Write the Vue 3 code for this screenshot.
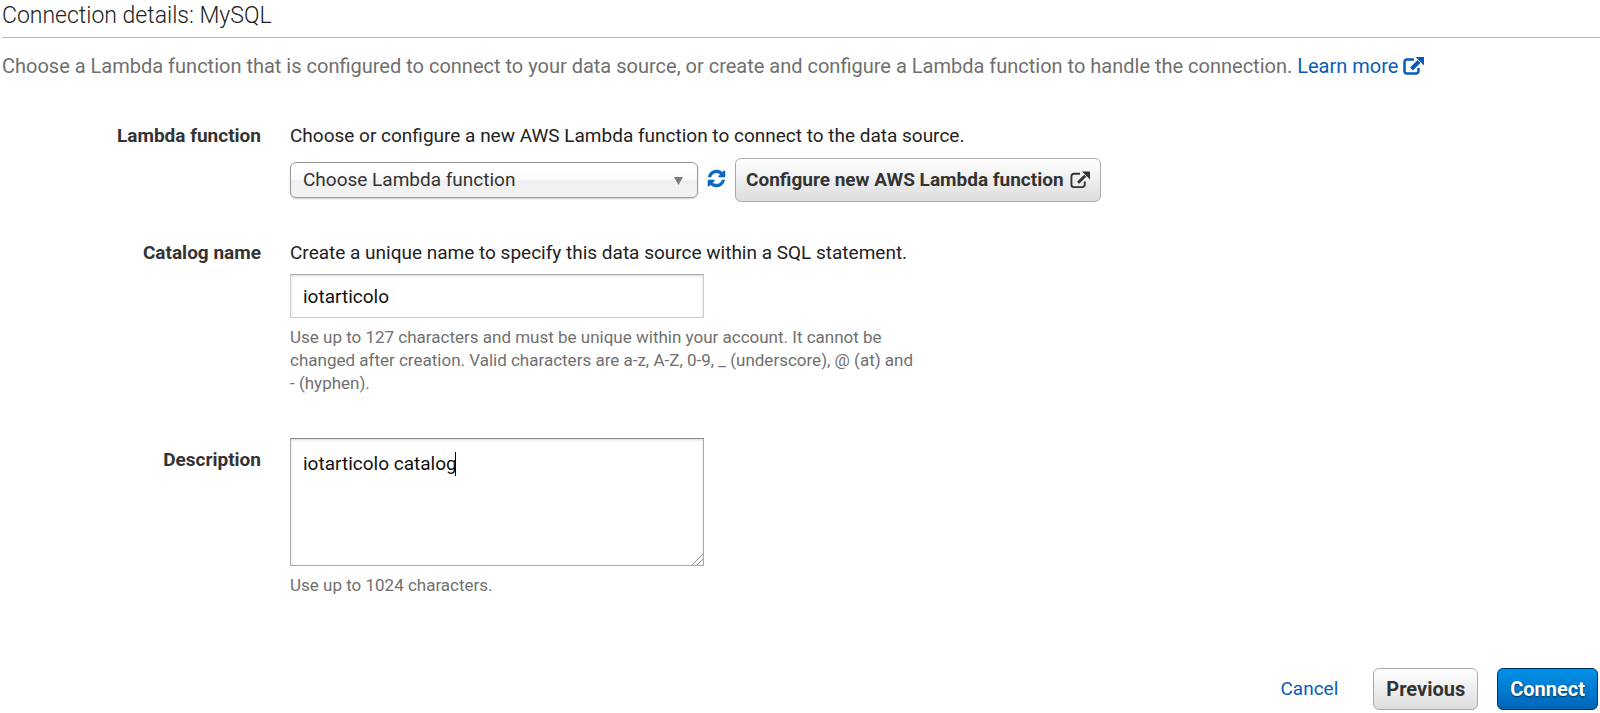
<script setup>
import { ref } from 'vue'

const lambdaFunction = ref('')
const catalogName = ref('iotarticolo')
const description = ref('iotarticolo catalog')
</script>

<template>
  <main class="page">
    <h1 class="title">Connection details: MySQL</h1>

    <p class="intro">
      Choose a Lambda function that is configured to connect to your data source, or create and configure a Lambda function to handle the connection.
      <a href="#" class="link">Learn more<svg class="ext" viewBox="0 0 21 18" aria-hidden="true">
        <path d="M11 2.500H4A2.500 2.500 0 0 0 1.500 5v9A2.500 2.500 0 0 0 4 16.500h9a2.500 2.500 0 0 0 2.500-2.500v-3" fill="none" stroke="currentColor" stroke-width="2.500" />
        <path d="M8.500 12L16 4.500" stroke="currentColor" stroke-width="4" />
        <path d="M12.500 0H21v8.500z" fill="currentColor" />
      </svg></a>
    </p>

    <form class="form" @submit.prevent>
      <div class="row">
        <label class="name" for="lambda">Lambda function</label>
        <div class="field">
          <p class="lead">Choose or configure a new AWS Lambda function to connect to the data source.</p>
          <div class="controls">
            <div class="select-wrap">
              <select id="lambda" v-model="lambdaFunction" class="select">
                <option value="">Choose Lambda function</option>
              </select>
              <svg class="arrow" viewBox="0 0 9 8" aria-hidden="true"><path d="M0 0h9L4.500 8z" fill="#7c7c7c" /></svg>
            </div>
            <button type="button" class="refresh" aria-label="Refresh functions">
              <svg viewBox="0 0 1536 1536" aria-hidden="true">
                <path fill="currentColor" stroke="currentColor" stroke-width="50" d="M1511 928q0 5-1 7-64 268-268 434.500T764 1536q-146 0-282.500-55T238 1324l-129 129q-19 19-45 19t-45-19-19-45V960q0-26 19-45t45-19h448q26 0 45 19t19 45-19 45l-137 137q71 66 161 102t187 36q134 0 250-65t186-179q11-17 53-117 8-23 30-23h192q13 0 22.500 9.500t9.500 22.500zm25-800v448q0 26-19 45t-45 19h-448q-26 0-45-19t-19-45 19-45l138-138Q969 256 768 256q-134 0-250 65T332 500q-11 17-53 117-8 23-30 23H50q-13 0-22.500-9.500T18 608v-7q65-268 270-434.500T768 0q146 0 284 55.500T1297 212l130-129q19-19 45-19t45 19 19 45z" />
              </svg>
            </button>
            <button type="button" class="btn configure">
              Configure new AWS Lambda function
              <svg class="ext" viewBox="0 0 21 18" aria-hidden="true">
                <path d="M10.500 2.500H4A2.500 2.500 0 0 0 1.500 5v9A2.500 2.500 0 0 0 4 16.500h9a2.500 2.500 0 0 0 2.500-2.500v-3.500" fill="none" stroke="currentColor" stroke-width="2" />
                <path d="M8.500 12L16 4.500" stroke="currentColor" stroke-width="3" />
                <path d="M12.500 0H21v8.500z" fill="currentColor" />
              </svg>
            </button>
          </div>
        </div>
      </div>

      <div class="row">
        <label class="name" for="catalog">Catalog name</label>
        <div class="field">
          <p class="lead">Create a unique name to specify this data source within a SQL statement.</p>
          <input id="catalog" v-model="catalogName" class="text" type="text" />
          <p class="hint">Use up to 127 characters and must be unique within your account. It cannot be changed after creation. Valid characters are a-z, A-Z, 0-9, _ (underscore), @ (at) and <span class="keep">- (hyphen).</span></p>
        </div>
      </div>

      <div class="row">
        <label class="name area-name" for="description">Description</label>
        <div class="field">
          <div class="area-wrap">
            <textarea id="description" v-model="description" class="text area"></textarea>
            <span class="caret" aria-hidden="true"></span>
          </div>
          <p class="hint">Use up to 1024 characters.</p>
        </div>
      </div>

      <div class="actions">
        <a href="#" class="link cancel">Cancel</a>
        <button type="button" class="btn">Previous</button>
        <button type="submit" class="btn primary">Connect</button>
      </div>
    </form>
  </main>
</template>

<style>
body {
  background: #fff;
}
</style>

<style scoped>
.page {
  font-family: Roboto, "Liberation Sans", sans-serif;
  font-size: 19px;
  line-height: 24px;
  color: #222;
  padding-left: 2px;
}
.page * {
  box-sizing: border-box;
}
p {
  margin: 0;
}
.title {
  margin: 0;
  padding-bottom: 5px;
  border-bottom: 1px solid #bbb;
  font-size: 23px;
  line-height: 32px;
  font-weight: 300;
}
.intro {
  margin-top: 15px;
  font-size: 20px;
  line-height: 26px;
  color: #6f6f6f;
}
.link {
  color: #0a5bb8;
  text-decoration: none;
}
.ext {
  width: 20px;
  height: 18px;
}
.intro .ext {
  width: 21px;
  margin-left: 5px;
  vertical-align: -2px;
}
.form {
  display: flex;
  flex-direction: column;
  margin-top: 45px;
}
.row {
  display: grid;
  grid-template-columns: 259px 1fr;
  column-gap: 29px;
  margin-bottom: 39px;
}
.name {
  text-align: right;
  font-weight: 700;
  color: #333;
}
.area-name {
  padding-top: 10px;
}
.controls {
  display: flex;
  align-items: center;
  margin-top: 10px;
}
.select-wrap {
  position: relative;
  width: 408px;
}
.select {
  appearance: none;
  display: block;
  width: 100%;
  height: 36px;
  padding: 0 36px 0 12px;
  border: 1px solid #999;
  border-radius: 6px;
  background: linear-gradient(#fff 0%, #fbfbfb 48%, #f0f0f0 52%, #f3f3f3 100%);
  box-shadow: 0 1px 2px rgba(0, 0, 0, 0.2);
  color: #333;
  font: inherit;
}
.arrow {
  position: absolute;
  right: 15px;
  top: 15px;
  width: 9px;
  height: 8px;
}
.refresh {
  display: flex;
  margin: 0 10px 4px;
  padding: 0;
  border: 0;
  background: none;
  color: #0a66bd;
}
.refresh svg {
  width: 17px;
  height: 17px;
  overflow: visible;
}
.btn {
  display: flex;
  align-items: center;
  height: 42px;
  padding: 0 12px;
  border: 1px solid #aaa;
  border-radius: 6px;
  background: linear-gradient(#fff, #ddd);
  color: #333;
  font: inherit;
  font-size: 20px;
  font-weight: 700;
}
.configure {
  gap: 6px;
  height: 44px;
  padding: 0 10px;
  font-size: 19px;
}
.text {
  display: block;
  width: 414px;
  height: 44px;
  padding: 0 12px;
  border: 1px solid #ccc;
  border-top-color: #aaa;
  border-radius: 0;
  background: #fff;
  box-shadow: inset 0 1px 3px rgba(0, 0, 0, 0.15);
  color: #111;
  font: inherit;
  outline: 0;
}
.lead + .text {
  margin-top: 9px;
}
.area-wrap {
  position: relative;
  width: 414px;
}
.area {
  height: 128px;
  padding: 13px 12px;
  border-color: #888 #aaa #aaa;
  resize: both;
}
.area::-webkit-resizer {
  background: linear-gradient(135deg, transparent 60%, #999 60%, #999 64%, transparent 64%, transparent 78%, #999 78%, #999 82%, transparent 82%);
}
.caret {
  position: absolute;
  left: 165px;
  top: 14px;
  width: 1px;
  height: 24px;
  background: #000;
}
.hint {
  max-width: 640px;
  margin: 8px 0 4px;
  font-size: 17px;
  line-height: 23px;
  color: #707070;
}
.keep {
  white-space: nowrap;
}
.actions {
  display: flex;
  justify-content: flex-end;
  align-items: center;
  gap: 19px;
  margin-top: 28px;
  padding-right: 2px;
}
.cancel {
  margin-right: 16px;
}
.primary {
  border-color: #00306b;
  background: linear-gradient(#0092e8, #0065b8);
  color: #fff;
  text-shadow: 0 1px 2px rgba(0, 0, 0, 0.6);
}
</style>
